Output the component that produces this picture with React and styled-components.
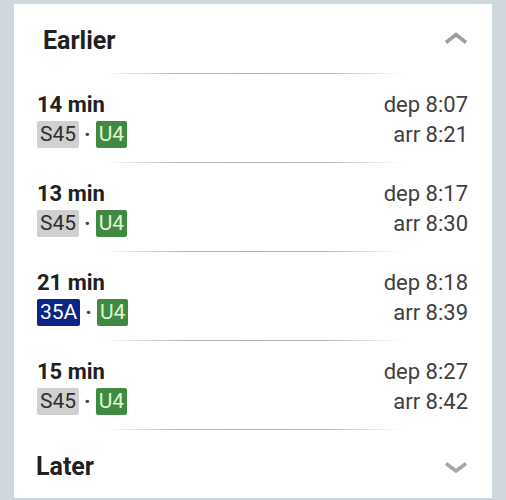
import React from "react";
import styled, { createGlobalStyle } from "styled-components";

const Global = createGlobalStyle`
  html, body { margin: 0; padding: 0; background: #cfd8dc; }
  body { font-family: Roboto, "Noto Sans", "Liberation Sans", sans-serif; }
`;

const Page = styled.div`
  padding: 4px 14px 2px 14px;
`;

const Card = styled.div`
  background: #ffffff;
  height: 494px;
  display: flex;
  flex-direction: column;
`;

const Section = styled.div`
  display: flex;
  align-items: center;
  justify-content: space-between;
  padding: ${p => p.$top}px 24px ${p => p.$bottom}px ${p => p.$left}px;
`;

const SectionTitle = styled.div`
  font-size: 25px;
  line-height: 32px;
  font-weight: 700;
  color: #212121;
`;

const Chevron = styled.svg`
  width: 24px;
  height: 12px;
  margin-bottom: ${p => p.$shift}px;
`;

const Divider = styled.div`
  width: 300px;
  height: 1px;
  margin: 0 auto;
  background: linear-gradient(to right, rgba(180,180,180,0), #b8b8b8 25%, #b0b0b0 50%, #b8b8b8 75%, rgba(180,180,180,0));
`;

const Row = styled.div`
  display: flex;
  justify-content: space-between;
  padding: 19px 24px 14px 23px;
  height: 88px;
  box-sizing: border-box;
`;

const Col = styled.div`
  display: flex;
  flex-direction: column;
  align-items: ${p => (p.$right ? "flex-end" : "flex-start")};
`;

const Duration = styled.div`
  font-size: 22px;
  line-height: 24px;
  font-weight: 700;
  color: #212121;
`;

const Lines = styled.div`
  display: flex;
  align-items: center;
  margin-top: 4px;
  height: 27px;
`;

const palette = {
  S: { bg: "#d0d0d0", fg: "#2e2e2e" },
  U: { bg: "#3f8a40", fg: "#dff7d2" },
  B: { bg: "#0c2687", fg: "#ffffff" },
};

const Badge = styled.span`
  display: inline-block;
  font-size: 21px;
  line-height: 27px;
  height: 27px;
  padding: 0 3px;
  border-radius: 2px;
  background: ${p => palette[p.$kind].bg};
  color: ${p => palette[p.$kind].fg};
`;

const Dot = styled.span`
  font-size: 22px;
  font-weight: 700;
  color: #424242;
  margin: 0 5px;
`;

const Time = styled.div`
  font-size: 22px;
  line-height: 24px;
  color: #404040;
  margin-top: ${p => p.$gap || 0}px;
`;

const trips = [
  { dur: "14 min", lines: [["S45", "S"], ["U4", "U"]], dep: "8:07", arr: "8:21" },
  { dur: "13 min", lines: [["S45", "S"], ["U4", "U"]], dep: "8:17", arr: "8:30" },
  { dur: "21 min", lines: [["35A", "B"], ["U4", "U"]], dep: "8:18", arr: "8:39" },
  { dur: "15 min", lines: [["S45", "S"], ["U4", "U"]], dep: "8:27", arr: "8:42" },
];

export default function App() {
  return (
    <Page>
      <Global />
      <Card>
        <Section $top={21} $bottom={16} $left={29}>
          <SectionTitle>Earlier</SectionTitle>
          <Chevron $shift={6} viewBox="0 0 24 12">
            <polyline points="2,10.5 12,2.5 22,10.5" fill="none" stroke="#9e9e9e" strokeWidth="3.6" strokeLinejoin="miter" />
          </Chevron>
        </Section>
        <Divider />
        {trips.map((t, i) => (
          <React.Fragment key={i}>
            <Row>
              <Col>
                <Duration>{t.dur}</Duration>
                <Lines>
                  {t.lines.map(([name, kind], j) => (
                    <React.Fragment key={name}>
                      {j > 0 && <Dot>·</Dot>}
                      <Badge $kind={kind}>{name}</Badge>
                    </React.Fragment>
                  ))}
                </Lines>
              </Col>
              <Col $right>
                <Time>dep {t.dep}</Time>
                <Time $gap={6}>arr {t.arr}</Time>
              </Col>
            </Row>
            <Divider />
          </React.Fragment>
        ))}
        <Section $top={21} $bottom={15} $left={22}>
          <SectionTitle>Later</SectionTitle>
          <Chevron $shift={0} viewBox="0 0 24 12">
            <polyline points="2,2.5 12,10 22,2.5" fill="none" stroke="#a8a8a8" strokeWidth="3.6" strokeLinejoin="miter" />
          </Chevron>
        </Section>
      </Card>
    </Page>
  );
}
